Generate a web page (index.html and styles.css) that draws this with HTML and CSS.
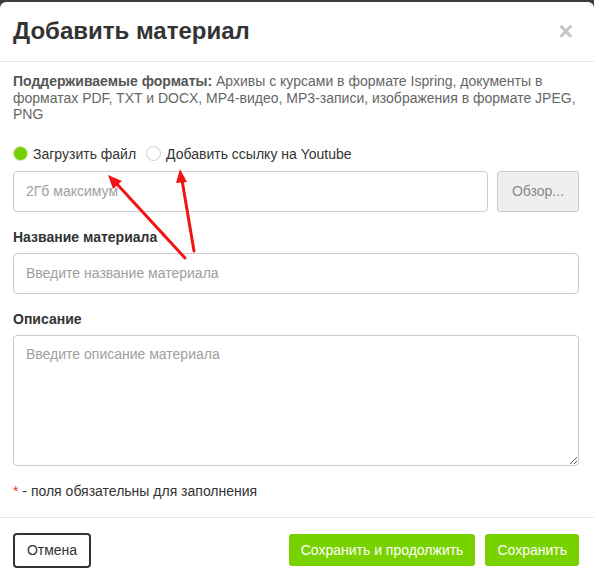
FILE: index.html
```html
<!DOCTYPE html>
<html lang="ru">
<head>
<meta charset="utf-8">
<title>Добавить материал</title>
<link rel="stylesheet" href="styles.css">
</head>
<body>
<div class="modal">
  <div class="modal-header">
    <h2 class="modal-title">Добавить материал</h2>
    <span class="close">×</span>
  </div>
  <div class="modal-body">
    <p class="formats"><span class="formats-lead">Поддерживаемые форматы:</span> Архивы с курсами в формате Ispring, документы в форматах PDF, TXT и DOCX, MP4-видео, MP3-записи, изображения в формате JPEG, PNG</p>
    <div class="radios">
      <label class="radio"><span class="dot checked"></span>Загрузить файл</label>
      <label class="radio"><span class="dot"></span>Добавить ссылку на Youtube</label>
    </div>
    <div class="file-row">
      <input class="field" type="text" placeholder="2Гб максимум">
      <span class="browse">Обзор...</span>
    </div>
    <label class="field-label">Название материала <span class="req">*</span></label>
    <input class="field" type="text" placeholder="Введите название материала">
    <label class="field-label">Описание</label>
    <textarea class="field area" placeholder="Введите описание материала"></textarea>
    <p class="note"><span class="req">*</span> - поля обязательны для заполнения</p>
  </div>
  <div class="modal-footer">
    <button class="btn btn-cancel">Отмена</button>
    <div class="actions">
      <button class="btn btn-green">Сохранить и продолжить</button>
      <button class="btn btn-green">Сохранить</button>
    </div>
  </div>
  <svg class="pointers" width="594" height="576" viewBox="0 0 594 576">
    <g stroke="#f01414" stroke-width="3" stroke-linecap="round">
      <line x1="185" y1="258" x2="116" y2="183"/>
      <line x1="194" y1="251" x2="182" y2="180"/>
    </g>
    <g fill="#f01414">
      <polygon points="108,175 122,181 113,189"/>
      <polygon points="180,169 187,182 176,183"/>
    </g>
  </svg>
</div>
</body>
</html>
```

FILE: styles.css
```css
html, body {
  margin: 0;
  padding: 0;
}

body {
  background: #3c3c3c;
  font-family: "Liberation Sans", Arial, sans-serif;
  color: #333;
  padding-top: 2px;
}

.modal {
  position: relative;
  background: #fff;
  border-radius: 6px 6px 0 0;
  height: 574px;
  overflow: hidden;
}

.modal-header {
  display: flex;
  align-items: center;
  justify-content: space-between;
  padding: 16px 21px 17px 13px;
  border-bottom: 1px solid #e5e5e5;
}

.modal-title {
  margin: 0;
  font-size: 24px;
  line-height: 26px;
  font-weight: bold;
  color: #333;
}

.close {
  font-size: 25px;
  font-weight: bold;
  line-height: 20px;
  color: #c4c4c4;
}

.modal-body {
  padding: 11px 15px 16px 13px;
  display: flex;
  flex-direction: column;
}

.formats {
  margin: 0;
  font-size: 14px;
  line-height: 16.5px;
  color: #666;
}

.formats-lead {
  font-weight: bold;
  color: #555;
}

.radios {
  display: flex;
  gap: 10px;
  margin-top: 21px;
  font-size: 14px;
  line-height: 20px;
}

.radio {
  display: flex;
  align-items: center;
  gap: 5px;
  color: #333;
}

.dot {
  width: 13px;
  height: 13px;
  border-radius: 50%;
  border: 1px solid #cfcfcf;
  background: #fff;
  box-sizing: content-box;
}

.dot.checked {
  background: #76cf00;
  border-color: #d6e9c0;
}

.file-row {
  display: flex;
  gap: 9px;
  margin-top: 7px;
}

.field {
  box-sizing: border-box;
  height: 41px;
  border: 1px solid #ccc;
  border-radius: 4px;
  padding: 0 12px;
  font-family: "Liberation Sans", Arial, sans-serif;
  font-size: 14px;
  color: #333;
  background: #fff;
  width: 100%;
  margin: 0;
}

.field::placeholder {
  color: #a0a0a0;
}

.file-row .field {
  flex: 1;
}

.browse {
  box-sizing: border-box;
  width: 82px;
  height: 41px;
  display: flex;
  align-items: center;
  justify-content: center;
  background: #efefef;
  border: 1px solid #ccc;
  border-radius: 3px;
  font-size: 14px;
  color: #888;
}

.field-label {
  font-size: 14px;
  line-height: 20px;
  font-weight: bold;
  color: #333;
  margin-top: 15px;
  margin-bottom: 6px;
}

.field-label .req {
  font-weight: normal;
  color: #f4b7b7;
}

.area {
  height: 131px;
  padding: 8px 12px;
  resize: vertical;
  line-height: 20px;
}

.note {
  margin: 15px 0 0;
  font-size: 14px;
  line-height: 20px;
  color: #333;
}

.req {
  color: #e33;
}

.modal-footer {
  display: flex;
  align-items: flex-start;
  justify-content: space-between;
  border-top: 1px solid #e5e5e5;
  padding: 15px 15px 0 13px;
}

.actions {
  display: flex;
  gap: 10px;
  padding-top: 1px;
}

.btn {
  font-family: "Liberation Sans", Arial, sans-serif;
  font-size: 14px;
  border-radius: 4px;
  margin: 0;
  cursor: pointer;
}

.btn-cancel {
  box-sizing: border-box;
  height: 35px;
  width: 78px;
  background: #fff;
  border: 2px solid #333;
  color: #333;
}

.btn-green {
  height: 32px;
  padding: 0 12px;
  border: none;
  background: #78d200;
  color: #fff;
  border-radius: 3px;
}

.pointers {
  position: absolute;
  left: 0;
  top: -2px;
  pointer-events: none;
}
```
